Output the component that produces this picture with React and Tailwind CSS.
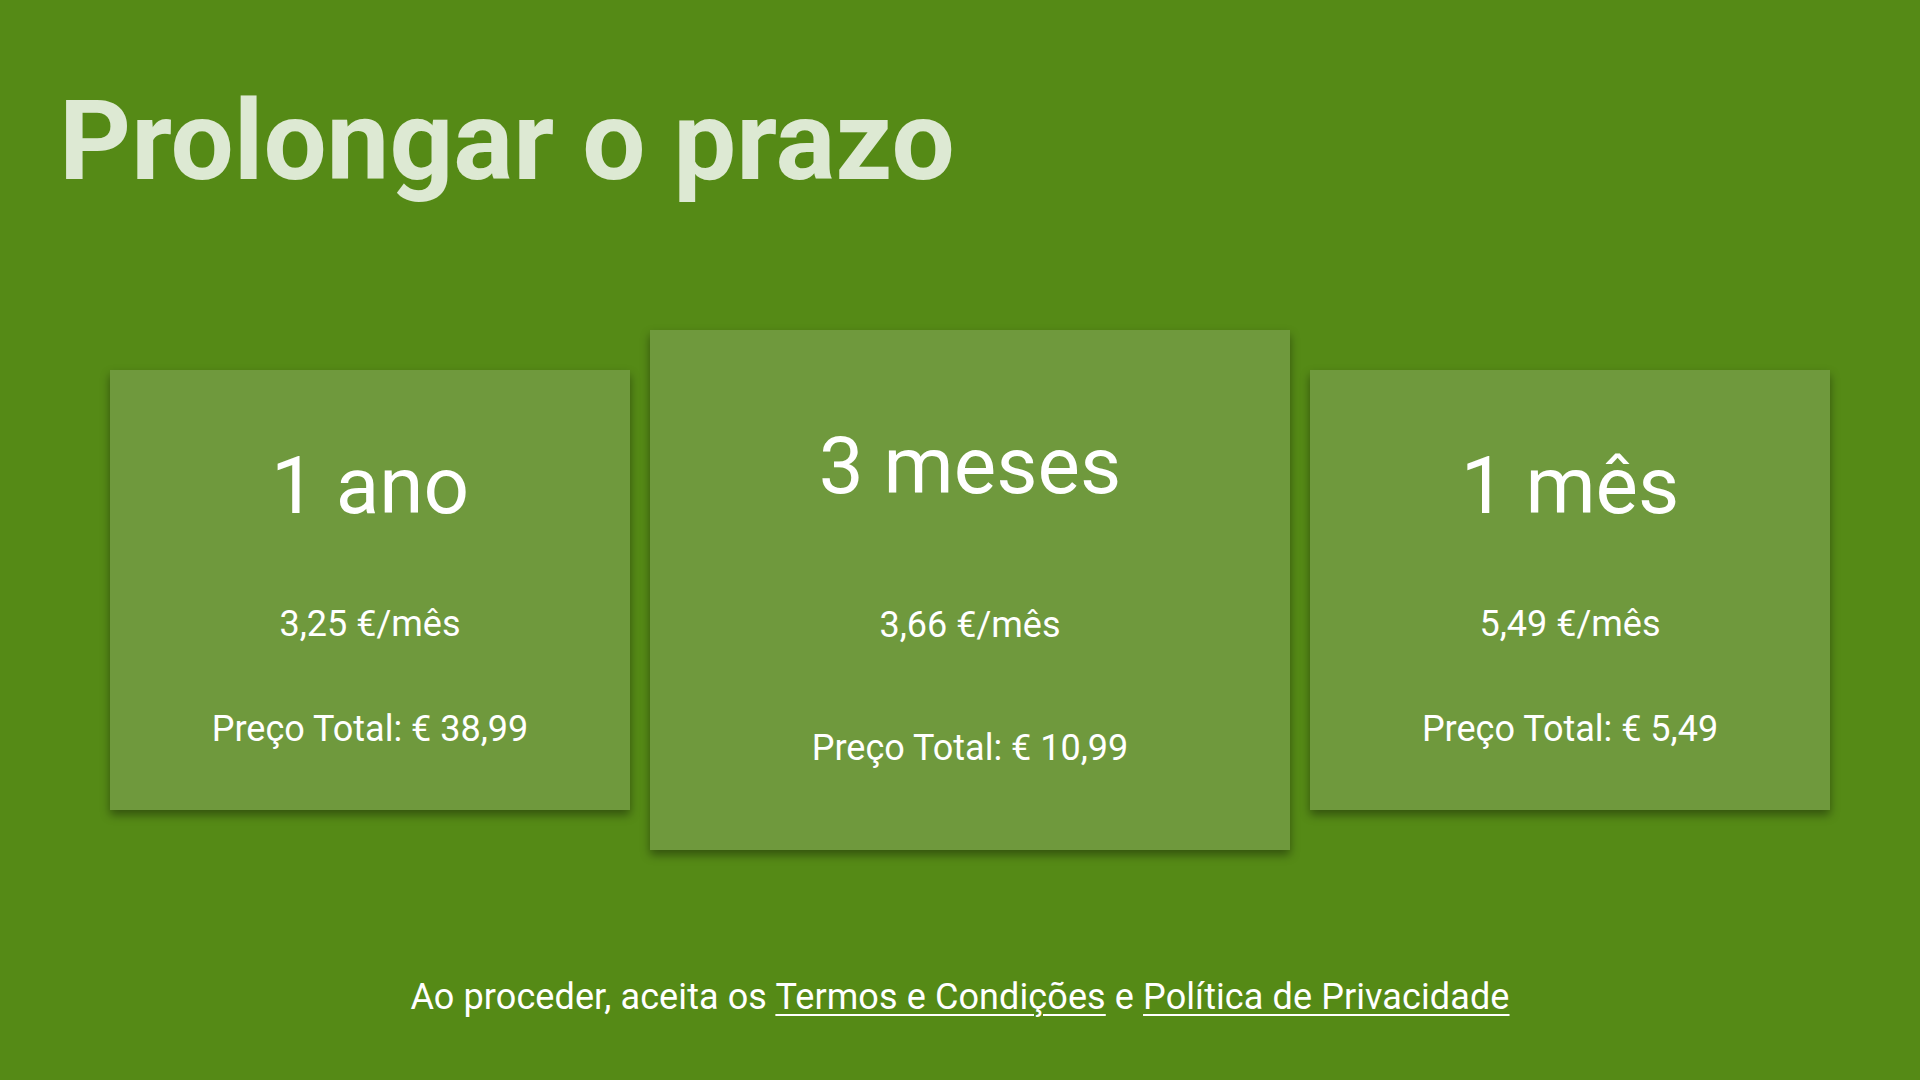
export default function App() {
  const font = { fontFamily: "Roboto, 'Noto Sans', sans-serif" };
  return (
    <div
      className="w-[1920px] h-[1080px] bg-[#558a16] overflow-hidden flex flex-col"
      style={font}
    >
      <h1 className="pl-[59px] pt-[85px] text-[112px] leading-none font-bold text-[#dde9d3]">
        Prolongar o prazo
      </h1>

      <div className="flex flex-row items-center gap-[20px] pl-[110px] mt-[133px]">
        <div className="w-[520px] h-[440px] bg-[#6f993d] shadow-[0_5px_9px_rgba(0,0,0,0.4)] flex flex-col items-center text-white pt-[76px]">
          <div className="text-[80px] leading-none">1 ano</div>
          <div className="text-[36px] leading-none mt-[80px]">3,25 €/mês</div>
          <div className="text-[36px] leading-none mt-[69px]">Preço Total: € 38,99</div>
        </div>
        <div className="w-[640px] h-[520px] bg-[#6f993d] shadow-[0_5px_9px_rgba(0,0,0,0.4)] flex flex-col items-center text-white pt-[96px]">
          <div className="text-[80px] leading-none">3 meses</div>
          <div className="text-[36px] leading-none mt-[101px]">3,66 €/mês</div>
          <div className="text-[36px] leading-none mt-[87px]">Preço Total: € 10,99</div>
        </div>
        <div className="w-[520px] h-[440px] bg-[#6f993d] shadow-[0_5px_9px_rgba(0,0,0,0.4)] flex flex-col items-center text-white pt-[76px]">
          <div className="text-[80px] leading-none">1 mês</div>
          <div className="text-[36px] leading-none mt-[80px]">5,49 €/mês</div>
          <div className="text-[36px] leading-none mt-[69px]">Preço Total: € 5,49</div>
        </div>
      </div>

      <p className="mt-[129px] text-center text-white text-[36px] leading-none tracking-[0.1px]">
        Ao proceder, aceita os{" "}
        <a className="underline decoration-2 underline-offset-[5px]" href="#">
          Termos e Condições
        </a>{" "}
        e{" "}
        <a className="underline decoration-2 underline-offset-[5px]" href="#">
          Política de Privacidade
        </a>
      </p>
    </div>
  );
}
